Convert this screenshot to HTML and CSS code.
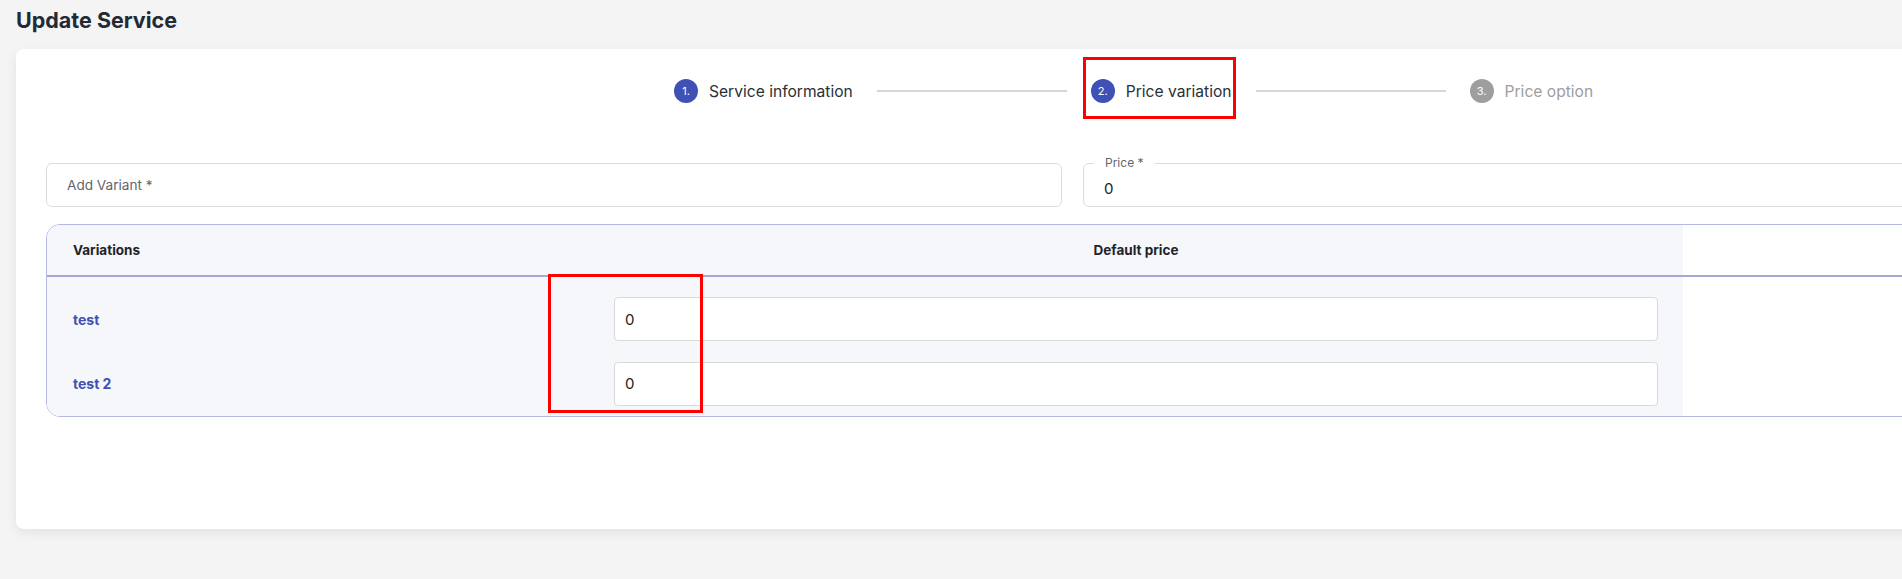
FILE: index.html
```html
<!DOCTYPE html>
<html lang="en">
<head>
<meta charset="utf-8">
<title>Update Service</title>
<link rel="stylesheet" href="styles.css">
</head>
<body>
<div class="page">
  <h1 class="page-title">Update Service</h1>
  <div class="card">
    <div class="stepper">
      <div class="step active">
        <span class="step-num">1.</span>
        <span class="step-label">Service information</span>
      </div>
      <div class="step-line"></div>
      <div class="step active">
        <span class="step-num">2.</span>
        <span class="step-label">Price variation</span>
      </div>
      <div class="step-line"></div>
      <div class="step disabled">
        <span class="step-num">3.</span>
        <span class="step-label">Price option</span>
      </div>
    </div>

    <div class="fields">
      <div class="field">
        <span class="placeholder">Add Variant *</span>
      </div>
      <div class="field outlined">
        <span class="float-label">Price *</span>
        <span class="value">0</span>
      </div>
    </div>

    <div class="variants">
      <div class="vrow vhead">
        <div class="vcell vname">Variations</div>
        <div class="vcell vprice head-center">Default price</div>
      </div>
      <div class="vbody">
        <div class="vrow">
          <div class="vcell vname link">test</div>
          <div class="vcell vprice"><div class="price-input">0</div></div>
        </div>
        <div class="vrow">
          <div class="vcell vname link">test 2</div>
          <div class="vcell vprice"><div class="price-input">0</div></div>
        </div>
      </div>
    </div>
  </div>

  <div class="annot annot-step"></div>
  <div class="annot annot-input"></div>
</div>
</body>
</html>
```

FILE: styles.css
```css
html, body {
  margin: 0;
  padding: 0;
  overflow: hidden;
}
body {
  background: #f4f4f4;
  font-family: Inter, "Noto Sans", "Liberation Sans", sans-serif;
  color: #222;
  width: 1902px;
  height: 579px;
}
.page {
  position: relative;
  padding: 8px 0 0 16px;
}
.page-title {
  margin: 0;
  font-size: 21.5px;
  line-height: 24px;
  font-weight: 700;
  color: #222a36;
}
.card {
  margin-top: 17px;
  width: 2240px;
  height: 480px;
  box-sizing: border-box;
  background: #fff;
  border-radius: 8px;
  box-shadow: 0 4px 12px rgba(0, 0, 0, 0.07);
  padding: 30px 0 0 30px;
}
.stepper {
  display: flex;
  align-items: center;
  height: 24px;
  margin-left: 628px;
}
.step {
  display: flex;
  align-items: center;
}
.step-num {
  width: 24px;
  height: 24px;
  border-radius: 50%;
  background: #3f51b5;
  color: #fff;
  font-size: 11px;
  display: flex;
  align-items: center;
  justify-content: center;
  flex-shrink: 0;
}
.step-label {
  margin-left: 11px;
  font-size: 15.6px;
  color: #2b2f36;
  white-space: nowrap;
}
.step.disabled .step-num {
  background: #9e9e9e;
}
.step.disabled .step-label {
  color: #9e9e9e;
}
.step-line {
  width: 190px;
  height: 2px;
  background: #d6d6d6;
  margin: 0 24px;
}
.fields {
  margin-top: 60px;
  display: flex;
  gap: 21px;
}
.field {
  position: relative;
  width: 1016px;
  height: 44px;
  box-sizing: border-box;
  border: 1px solid #dcdcdc;
  border-radius: 6px;
  display: flex;
  align-items: center;
  padding-left: 20px;
}
.placeholder {
  font-size: 13.6px;
  color: #5f6670;
}
.field.outlined .value {
  font-size: 15px;
  color: #222;
  margin-top: 6px;
}
.float-label {
  position: absolute;
  left: 10px;
  top: -8px;
  padding: 0 11px;
  background: #fff;
  font-size: 12px;
  line-height: 14px;
  color: #5f6670;
}
.variants {
  margin-top: 17px;
  width: 2200px;
  border: 1px solid #b4b8e2;
  border-radius: 14px;
  overflow: hidden;
}
.vrow {
  display: flex;
}
.vhead {
  height: 50px;
  border-bottom: 2px solid #a3a8d6;
}
.vcell {
  box-sizing: border-box;
  background: #f6f7fb;
  display: flex;
  align-items: center;
}
.vname {
  width: 542px;
  padding-left: 26px;
  font-size: 13.5px;
  font-weight: 700;
  color: #1f232a;
}
.vprice {
  width: 1094px;
  padding: 0 25px;
}
.head-center {
  justify-content: center;
  font-size: 13.5px;
  font-weight: 700;
  color: #1f232a;
}
.vbody {
  width: 1636px;
  background: #f6f7fb;
  padding: 10px 0 0;
}
.vbody .vcell {
  padding-top: 10px;
  padding-bottom: 10.5px;
}
.vbody .vprice {
  padding-left: 25px;
  padding-right: 25px;
}
.link {
  color: #3f51b5;
  font-size: 14px;
}
.price-input {
  width: 100%;
  height: 44px;
  box-sizing: border-box;
  border: 1px solid #dadada;
  border-radius: 4px;
  background: #fff;
  display: flex;
  align-items: center;
  padding-left: 10px;
  font-size: 15px;
  color: #222;
}
.annot {
  position: absolute;
  border: 3px solid #ff0000;
  box-sizing: border-box;
}
.annot-step {
  left: 1083px;
  top: 57px;
  width: 153px;
  height: 62px;
}
.annot-input {
  left: 548px;
  top: 274px;
  width: 155px;
  height: 139px;
}
```
